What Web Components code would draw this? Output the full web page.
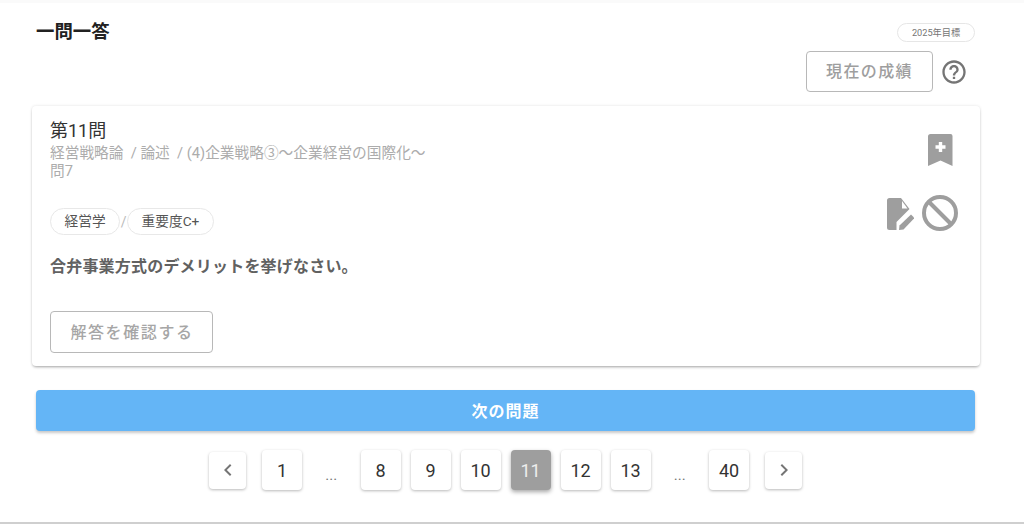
<!DOCTYPE html>
<html lang="ja">
<head>
<meta charset="utf-8">
<title>一問一答</title>
<style>
  html, body { margin: 0; height: 100%; background: #fff; }
  body { font-family: Roboto, "Noto Sans CJK JP", sans-serif; color: #212121; overflow: hidden; }
</style>
</head>
<body>

<quiz-page>
  <quiz-header title-text="一問一答" target="2025年目標" action="現在の成績"></quiz-header>
  <quiz-card></quiz-card>
  <next-button>次の問題</next-button>
  <quiz-pager current="11" pages="1,…,8,9,10,11,12,13,…,40"></quiz-pager>
</quiz-page>

<script>
const ICONS = {
  help: '<path d="M11 18h2v-2h-2v2zm1-16C6.48 2 2 6.48 2 12s4.48 10 10 10 10-4.48 10-10S17.52 2 12 2zm0 18c-4.41 0-8-3.59-8-8s3.59-8 8-8 8 3.59 8 8-3.59 8-8 8zm0-14c-2.21 0-4 1.79-4 4h2c0-1.1.9-2 2-2s2 .9 2 2c0 2-3 1.75-3 5h2c0-2.25 3-2.5 3-5 0-2.21-1.79-4-4-4z"/>',
  bookmark: '<path fill-rule="evenodd" d="M2.500 0h20a2 2 0 0 1 2 2v30l-12-5.400L0 32V2.500A2.500 2.500 0 0 1 2.500 0zM10.800 8v3.300H7.500v3.400h3.300V18h3.400v-3.300h3.300v-3.400h-3.300V8z"/>',
  note: '<path d="M2.500 0H14l8.500 11L9.500 24V32H2.500A2.500 2.500 0 0 1 0 29.500v-27A2.500 2.500 0 0 1 2.500 0z"/><path fill="#fff" d="M15 3v7.500h5.500z"/><path d="M12 32l.5-4.500L24 16.500l3.500 3.500L16.500 31.500z"/>',
  block: '<circle cx="18" cy="18" r="16" fill="none" stroke="#9e9e9e" stroke-width="4"/><path d="M7 7l22 22" fill="none" stroke="#9e9e9e" stroke-width="4"/>',
  prev: '<path d="M15.400 7.400 14 6l-6 6 6 6 1.400-1.400L10.800 12z"/>',
  next: '<path d="M10 6 8.600 7.400 13.200 12l-4.600 4.600L10 18l6-6z"/>'
};

class QuizPage extends HTMLElement {
  constructor() {
    super();
    this.attachShadow({mode: 'open'}).innerHTML = `
      <style>
        :host {
          display: flex;
          flex-direction: column;
          box-sizing: border-box;
          height: 524px;
          padding: 4px 44px 0 32px;
          background: #fff;
          border-bottom: 2px solid #cfcfcf;
          box-shadow: inset 0 3px 0 #fafafa;
        }
      </style>
      <slot></slot>
    `;
  }
}

class QuizHeader extends HTMLElement {
  connectedCallback() {
    this.attachShadow({mode: 'open'}).innerHTML = `
      <style>
        :host {
          display: flex;
          justify-content: space-between;
          height: 102px;
          padding: 0 5px 0 4px;
        }
        h1 {
          margin: 16px 0 0;
          font-size: 18.400px;
          line-height: 24px;
          font-weight: 700;
          color: #212121;
        }
        .side {
          display: flex;
          flex-direction: column;
          align-items: flex-end;
          padding-top: 19px;
        }
        .target {
          box-sizing: border-box;
          height: 19px;
          width: 78px;
          border: 1px solid #e6e6e6;
          border-radius: 10px;
          font-size: 9.200px;
          line-height: 17px;
          text-align: center;
          color: #757575;
        }
        .row {
          display: flex;
          align-items: center;
          gap: 7px;
          margin-top: 9px;
          margin-right: 7px;
          height: 41px;
        }
        button {
          box-sizing: border-box;
          width: 127px;
          height: 41px;
          padding: 0;
          background: #fff;
          border: 1px solid #b8b8b8;
          border-radius: 4px;
          font: 500 16px/1 Roboto, "Noto Sans CJK JP", sans-serif;
          letter-spacing: 1.400px;
          color: #9e9e9e;
        }
        svg { width: 28px; height: 28px; fill: #757575; display: block; }
      </style>
      <h1>${ this.getAttribute('title-text') }</h1>
      <div class="side">
        <div class="target">${ this.getAttribute('target') }</div>
        <div class="row">
          <button>${ this.getAttribute('action') }</button>
          <svg viewBox="0 0 24 24">${ ICONS.help }</svg>
        </div>
      </div>
    `;
  }
}

class QuizChip extends HTMLElement {
  constructor() {
    super();
    this.attachShadow({mode: 'open'}).innerHTML = `
      <style>
        :host {
          display: inline-flex;
          align-items: center;
          box-sizing: border-box;
          height: 27px;
          padding: 0 13.500px 3px;
          border: 1px solid #e8e8e8;
          border-radius: 14px;
          font-size: 13.700px;
          color: #555;
        }
      </style>
      <slot></slot>
    `;
  }
}

class QuizCard extends HTMLElement {
  constructor() {
    super();
    this.attachShadow({mode: 'open'}).innerHTML = `
      <style>
        :host {
          display: block;
          box-sizing: border-box;
          width: 948px;
          height: 260px;
          padding: 14px 19px 0 18px;
          background: #fff;
          border-radius: 4px;
          box-shadow: 0 2px 3px -1px rgba(0,0,0,.32), 0 0 3px rgba(0,0,0,.12);
        }
        .top { display: flex; justify-content: space-between; }
        .name { font-size: 18px; line-height: 22px; color: #333; }
        .path { font-size: 14.700px; line-height: 18px; color: #acacac; width: 400px; margin-top: 2px; }
        .bookmark { width: 25px; height: 32px; fill: #9e9e9e; margin: 14px 8px 0 0; display: block; }
        .middle { display: flex; justify-content: space-between; align-items: flex-start; margin-top: 15px; }
        .chips { display: flex; align-items: center; margin-top: 13px; }
        .sep { width: 7px; text-align: center; font-size: 14px; color: #bbb; }
        .tools { display: flex; align-items: center; gap: 8px; margin-right: 3px; }
        .tools svg { display: block; fill: #9e9e9e; }
        .note { width: 27px; height: 32px; margin-top: 1px; }
        .block { width: 36px; height: 36px; }
        .question { margin: 21px 0 0; font-size: 16px; line-height: 22px; font-weight: 700; color: #616161; letter-spacing: .2px; }
        button {
          display: block;
          box-sizing: border-box;
          width: 163px;
          height: 42px;
          margin-top: 33px;
          padding: 1px 0 0 1px;
          background: #fff;
          border: 1px solid #b8b8b8;
          border-radius: 4px;
          font: 500 16px/1 Roboto, "Noto Sans CJK JP", sans-serif;
          letter-spacing: 1.600px;
          color: #a6a6a6;
        }
      </style>
      <div class="top">
        <div>
          <div class="name">第11問</div>
          <div class="path">経営戦略論 &nbsp;/ 論述 &nbsp;/ (4)企業戦略③～企業経営の国際化～<br>問7</div>
        </div>
        <svg class="bookmark" viewBox="0 0 25 32">${ ICONS.bookmark }</svg>
      </div>
      <div class="middle">
        <div class="chips">
          <quiz-chip>経営学</quiz-chip><span class="sep">/</span><quiz-chip>重要度C+</quiz-chip>
        </div>
        <div class="tools">
          <svg class="note" viewBox="0 0 27 32">${ ICONS.note }</svg>
          <svg class="block" viewBox="0 0 36 36">${ ICONS.block }</svg>
        </div>
      </div>
      <p class="question">合弁事業方式のデメリットを挙げなさい。</p>
      <button>解答を確認する</button>
    `;
  }
}

class NextButton extends HTMLElement {
  constructor() {
    super();
    this.attachShadow({mode: 'open'}).innerHTML = `
      <style>
        :host {
          display: flex;
          align-items: center;
          justify-content: center;
          box-sizing: border-box;
          width: 939px;
          height: 41px;
          margin: 24px 0 0 4px;
          padding-bottom: 1px;
          background: #64b5f6;
          border-radius: 4px;
          box-shadow: 0 2px 3px rgba(0,0,0,.22);
          font-size: 16px;
          letter-spacing: 1px;
          font-weight: 700;
          color: #fff;
        }
      </style>
      <slot></slot>
    `;
  }
}

class QuizPager extends HTMLElement {
  connectedCallback() {
    const current = this.getAttribute('current');
    const items = this.getAttribute('pages').split(',').map(page => {
      if (page === '…') return '<span class="dots">...</span>';
      const cls = page === current ? 'page on' : 'page';
      return `<span class="${ cls }">${ page }</span>`;
    }).join('');
    this.attachShadow({mode: 'open'}).innerHTML = `
      <style>
        :host {
          display: flex;
          align-items: center;
          margin: 19px 0 0 177px;
          height: 40px;
          gap: 10px;
        }
        span { box-sizing: border-box; }
        .page, .arrow {
          display: flex;
          align-items: center;
          justify-content: center;
          background: #fff;
          border-radius: 4px;
          box-shadow: 0 1px 3px rgba(0,0,0,.28);
        }
        .page { width: 40px; height: 40px; font-size: 18px; color: #333; }
        .page.on { background: #9e9e9e; color: #eee; box-shadow: 0 2px 4px rgba(0,0,0,.35); }
        .arrow { width: 37px; height: 37px; }
        .arrow.prev { margin-right: 6px; }
        .arrow.next { margin-left: 6px; }
        .arrow svg { width: 24px; height: 24px; fill: #757575; }
        .dots { width: 38.500px; text-align: center; font-size: 15px; color: #757575; padding-top: 9px; }
      </style>
      <span class="arrow prev"><svg viewBox="0 0 24 24">${ ICONS.prev }</svg></span>
      ${ items }
      <span class="arrow next"><svg viewBox="0 0 24 24">${ ICONS.next }</svg></span>
    `;
  }
}

customElements.define('quiz-page', QuizPage);
customElements.define('quiz-header', QuizHeader);
customElements.define('quiz-chip', QuizChip);
customElements.define('quiz-card', QuizCard);
customElements.define('next-button', NextButton);
customElements.define('quiz-pager', QuizPager);
</script>
</body>
</html>
